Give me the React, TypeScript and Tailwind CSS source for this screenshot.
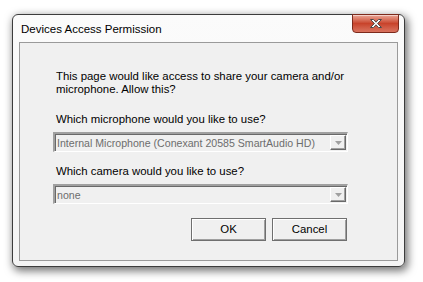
import React from 'react';

const ui = "font-['Liberation_Sans',Arial,sans-serif]";

function ComboBox({ value }: { value: string }) {
  return (
    <div className="flex h-[20px] w-[295px] border-t-2 border-l-2 border-t-[#a0a0a0] border-l-[#a0a0a0] border-b border-r border-b-white border-r-white bg-[#f0f0f0] shadow-[inset_1px_1px_0_#696969]">
      <div className="flex-1 overflow-hidden whitespace-nowrap pl-[2px] pt-[2px] text-[10.6px] leading-[14px] text-[#6d6d6d]">{value}</div>
      <div className="m-[1px] flex w-[16px] items-center justify-center border border-t-white border-l-white border-b-[#696969] border-r-[#696969] bg-[#f0f0f0] shadow-[inset_-1px_-1px_0_#a0a0a0]">
        <svg width="7" height="4" viewBox="0 0 7 4">
          <path d="M0 0H7L3.5 4Z" fill="#a0a0a0" />
        </svg>
      </div>
    </div>
  );
}

function Button({ label }: { label: string }) {
  return (
    <button className="h-[23px] w-[75px] border border-[#6f6f6f] bg-[#f0f0f0] text-[11.4px] text-black shadow-[inset_1px_1px_0_#ffffff,inset_-1px_-1px_0_#a0a0a0]">
      {label}
    </button>
  );
}

export default function App() {
  return (
    <div className={`h-[282px] w-[423px] overflow-hidden bg-white pl-[12px] pt-[14px] ${ui}`}>
      <div className="flex h-[253px] w-[393px] flex-col rounded-[6px] border border-[#3c3c3c] bg-gradient-to-b from-[#fbfbfb] to-[#f4f4f4] px-[6px] pb-[5px] shadow-[2px_3px_9px_1px_rgba(0,0,0,0.55)]">
        {/* Title bar */}
        <div className="relative h-[27px]">
          <span className="absolute left-[2px] top-[6px] text-[11.5px] leading-[16px] text-black">Devices Access Permission</span>
          <div className="absolute right-[-1px] top-[-1px] flex h-[19px] w-[47px] items-center justify-center rounded-b-[4px] border border-[#7d2a1c] bg-gradient-to-b from-[#e9a596] via-[#c8432b] to-[#d9735f] shadow-[inset_0_1px_0_rgba(255,255,255,0.5)]">
            <svg width="14" height="11" viewBox="0 0 14 11">
              <path d="M1.5 1.5H4.5L7 4.2L9.5 1.5H12.5L8.6 5.5L12.5 9.5H9.5L7 6.8L4.5 9.5H1.5L5.4 5.5Z" fill="#ffffff" stroke="#4a4a4a" strokeWidth="1" strokeLinejoin="round" />
            </svg>
          </div>
        </div>
        {/* Client area */}
        <div className="flex h-[219px] flex-col border border-[#9a9a9a] bg-[#f0f0f0] pl-[33px] pt-[27px] text-[11.4px] leading-[13px] text-black">
          <p className="pl-[3px]">
            This page would like access to share your camera and/or
            <br />
            microphone. Allow this?
          </p>
          <p className="mt-[17px] pl-[3px]">Which microphone would you like to use?</p>
          <div className="mt-[6px]">
            <ComboBox value="Internal Microphone (Conexant 20585 SmartAudio HD)" />
          </div>
          <p className="mt-[13px] pl-[3px]">Which camera would you like to use?</p>
          <div className="mt-[6px]">
            <ComboBox value="none" />
          </div>
          <div className="mt-[14px] flex w-[295px] justify-end gap-[6px] pr-[1px]">
            <Button label="OK" />
            <Button label="Cancel" />
          </div>
        </div>
      </div>
    </div>
  );
}
